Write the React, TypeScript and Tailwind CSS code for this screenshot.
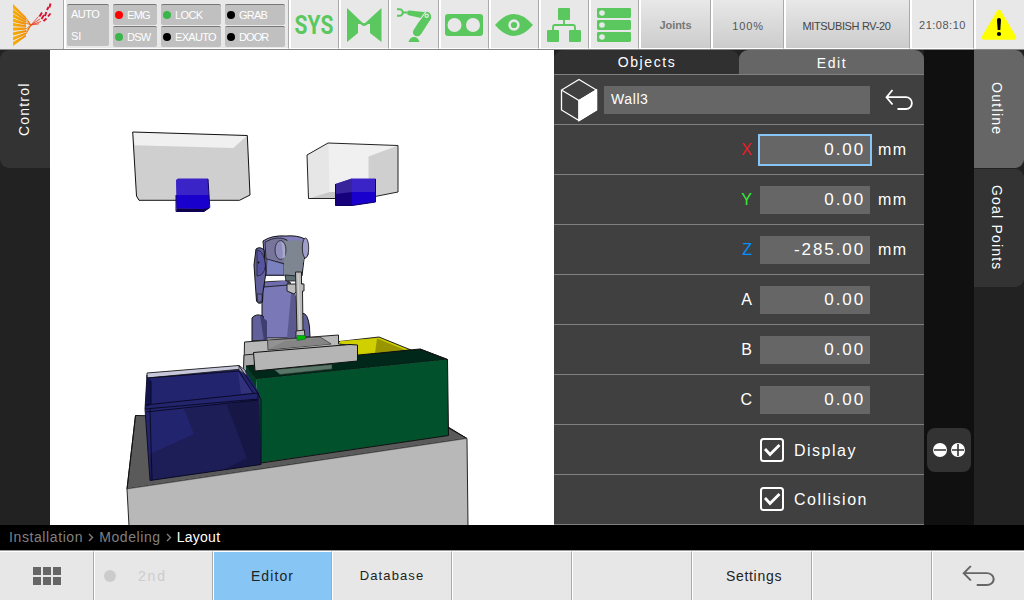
import React from "react";

const GREEN = "#5ac85e";

function TopCell({ width, gradient, children }: { width: string; gradient?: boolean; children?: React.ReactNode }) {
  return (
    <div
      className={`flex h-full shrink-0 items-center justify-center border-r border-l-2 border-b border-r-[#aaaaaa] border-l-white border-b-white ${width} ${
        gradient ? "bg-linear-to-b from-[#e8e8e8] to-[#cccccc]" : "bg-[#e8e8e8]"
      }`}
    >
      {children}
    </div>
  );
}

function Lamp({ color, label, tracking }: { color: string; label: string; tracking: string }) {
  return (
    <div className="flex h-[21px] items-center gap-[4px] rounded-[2px] border-t border-[#777777] bg-[#c0c0c0] pl-[2px] text-white">
      <span className={`size-[8px] shrink-0 rounded-full ${color}`} />
      <span className={`text-[11px] leading-none ${tracking}`}>{label}</span>
    </div>
  );
}

function Logo() {
  const rays = [
    [4, 9], [9.2, 13.6], [14, 18], [18.5, 22.3], [23, 26.6], [27.5, 31.2], [32.2, 36], [37, 41], [42, 46.5],
  ];
  const ends = [17, 19, 21, 23, 25.2, 27.6, 30, 32.4, 34.6];
  return (
    <svg width="63" height="49" viewBox="0 0 63 49">
      <defs>
        <linearGradient id="flame" gradientUnits="userSpaceOnUse" x1="13" y1="0" x2="38" y2="0">
          <stop offset="0" stopColor="#f8b000" />
          <stop offset="0.55" stopColor="#f08a10" />
          <stop offset="1" stopColor="#e02020" />
        </linearGradient>
      </defs>
      <g fill="url(#flame)">
        {rays.map((r, i) => (
          <path key={i} d={`M13 ${r[0]}L26 ${ends[i]}V${ends[i] + 1.9}L13 ${r[1] - 0.4}Z`} />
        ))}
      </g>
      <g stroke="url(#flame)" strokeWidth="1" fill="none">
        <path d="M26 18L31 25L26 34M26 20.5L31 25L26 32M26 23L31 25L26 29" />
      </g>
      <g stroke="#e8452a" strokeWidth="0.9">
        <path d="M31 25L38.5 16.5M31 25L40 19M31 25L41 21.5M31 25L39 23.8" />
      </g>
      <g stroke="#d8102c" strokeWidth="1.9">
        <path d="M39.5 16.5L42 12.5M41.5 19L44 15M45 16L46.3 12M43.5 21L46.5 18.5M47 10L48.5 7M49.5 7.5L50.5 3.5M48 16.5L50.5 13.5" />
      </g>
    </svg>
  );
}

function StatusIcons() {
  return (
    <>
      <TopCell width="w-[50px]">
        <span className="mt-[2px] mr-[1px] scale-x-[0.81] whitespace-nowrap font-[Roboto] text-[26px] leading-none font-bold text-[#5ac85e]">SYS</span>
      </TopCell>
      <TopCell width="w-[50px]">
        <svg className="shrink-0" width="47" height="48" viewBox="341 0 47 48">
          <path fill={GREEN} d="M347 8L362 22.3Q364 24.3 366 22.3L381.5 8V42L370 33V24H368Q366 26 364 26T360.5 24H358V33L347 42Z" />
        </svg>
      </TopCell>
      <TopCell width="w-[50px]">
        <svg className="shrink-0" width="47" height="48" viewBox="391 0 47 48">
          <path d="M397 9.2H399.5A3.3 3.3 0 0 1 399.5 15.8H397" fill="none" stroke={GREEN} strokeWidth="2" />
          <path d="M402 12.5H407" stroke={GREEN} strokeWidth="2" />
          <path fill={GREEN} d="M409.5 10.6Q407 10.4 407 13Q407 15.2 409.5 15.6L421 18L426 12.3Z" />
          <circle cx="426" cy="16.8" r="5.2" fill={GREEN} />
          <path fill={GREEN} d="M420 20L413.3 30.5Q412 34.5 415.5 36Q419.5 37 421.5 33.5L431 18.5L427 13Z" />
          <path d="M418.5 21.5L426.5 10.8" stroke="#e8e8e8" strokeWidth="1.1" />
          <circle cx="426.7" cy="15.8" r="1.6" fill="none" stroke="#e8e8e8" strokeWidth="1.3" />
          <path fill={GREEN} d="M408.5 42Q410 37 414 37T419.5 42Z" />
        </svg>
      </TopCell>
      <TopCell width="w-[50px]">
        <svg className="shrink-0" width="47" height="48" viewBox="441 0 47 48">
          <rect x="445" y="14" width="38" height="22" rx="3" fill={GREEN} />
          <circle cx="454.5" cy="25" r="7" fill="#e8e8e8" />
          <circle cx="473" cy="25" r="7" fill="#e8e8e8" />
        </svg>
      </TopCell>
      <TopCell width="w-[50px]">
        <svg className="shrink-0" width="47" height="48" viewBox="491 0 47 48">
          <path fill={GREEN} d="M495 25Q514 3 533 25Q514 47 495 25Z" />
          <circle cx="514" cy="25" r="4.4" fill={GREEN} stroke="#e8e8e8" strokeWidth="2.6" />
        </svg>
      </TopCell>
      <TopCell width="w-[50px]">
        <svg className="shrink-0" width="47" height="48" viewBox="541 0 47 48">
          <g fill={GREEN}>
            <rect x="558" y="8" width="12" height="12" rx="1" />
            <rect x="547" y="30" width="12" height="12" rx="1" />
            <rect x="569" y="30" width="12" height="12" rx="1" />
          </g>
          <path d="M564 20V25M553 30V27Q553 25 555 25H573Q575 25 575 27V30" fill="none" stroke={GREEN} strokeWidth="1.8" />
        </svg>
      </TopCell>
      <TopCell width="w-[50px]">
        <svg className="shrink-0" width="47" height="48" viewBox="591 0 47 48">
          {[8, 20, 32].map((y) => (
            <g key={y}>
              <rect x="597" y={y} width="34" height="10" rx="1.4" fill={GREEN} />
              <circle cx="602" cy={y + 5} r="2.8" fill="#e8e8e8" />
            </g>
          ))}
        </svg>
      </TopCell>
    </>
  );
}

function TopBar() {
  return (
    <header className="flex h-[50px] shrink-0 border-b border-[#858585] bg-[#e8e8e8]">
      <div className="w-[64px] shrink-0 border-r border-[#aaaaaa]">
        <Logo />
      </div>
      <div className="flex w-[225px] shrink-0 gap-[4px] border-r border-b border-l-2 border-r-[#aaaaaa] border-b-white border-l-white pt-[4px] pl-px">
        <div className="h-[42px] w-[42px] rounded-[2px] border-t border-[#777777] bg-[#c0c0c0] pl-[4px] text-[11px] text-white">
          <div className="h-[22px] pt-[4px] leading-none tracking-[-0.5px]">AUTO</div>
          <div className="pt-[4px] leading-none">SI</div>
        </div>
        <div className="flex w-[44px] flex-col gap-px">
          <Lamp color="bg-[#ff0000]" label="EMG" tracking="tracking-[-0.7px]" />
          <Lamp color="bg-[#39b54a]" label="DSW" tracking="tracking-[-0.8px]" />
        </div>
        <div className="flex w-[60px] flex-col gap-px">
          <Lamp color="bg-[#39b54a]" label="LOCK" tracking="tracking-[-0.6px]" />
          <Lamp color="bg-black" label="EXAUTO" tracking="tracking-[-0.7px]" />
        </div>
        <div className="flex w-[60px] flex-col gap-px">
          <Lamp color="bg-black" label="GRAB" tracking="tracking-[-0.8px]" />
          <Lamp color="bg-black" label="DOOR" tracking="tracking-[-0.9px]" />
        </div>
      </div>
      <StatusIcons />
      <TopCell width="w-[72px]" gradient>
        <span className="mt-[2px] text-[11px] font-bold tracking-[-0.05px] text-[#777777]">Joints</span>
      </TopCell>
      <TopCell width="w-[73px]" gradient>
        <span className="mt-[4px] text-[11px] tracking-[0.9px] text-[#555555]">100%</span>
      </TopCell>
      <TopCell width="w-[126px]" gradient>
        <span className="mt-[4px] mr-[2px] text-[11px] tracking-[-0.35px] whitespace-nowrap text-[#444444]">MITSUBISH RV-20</span>
      </TopCell>
      <TopCell width="w-[64px]">
        <span className="mt-[2px] text-[11px] tracking-[0.5px] text-[#555555]">21:08:10</span>
      </TopCell>
      <div className="w-[50px] shrink-0 border-l-2 border-white">
        <svg width="48" height="49" viewBox="976 0 48 49">
          <path d="M999 12L1014 37.5H984Z" fill="#ffff00" stroke="#ffff00" strokeWidth="4.5" strokeLinejoin="round" />
          <path d="M997 20Q997 18 999 18T1001 20L1000.3 30H997.7Z" />
          <circle cx="999" cy="34" r="2.1" />
        </svg>
      </div>
    </header>
  );
}

function Scene() {
  return (
    <svg className="w-[504px] shrink-0 bg-white" height="475" viewBox="50 50 504 475" strokeLinejoin="round">
      {/* table */}
      <path d="M135.5 415.5L440 422L467 438.5L127 489Z" fill="#5a5a5a" stroke="#111" />
      <path d="M127 489L467 438.5L468 526H129Z" fill="#b8b8b8" />
      <path d="M127 489L129 526M127 489L135.5 415.5M448.5 428L467 438.5L468 526" fill="none" stroke="#111" strokeWidth="0.9" />
      <path d="M127 489L467 438.5" stroke="#555" strokeWidth="0.6" />

      {/* upper left camera */}
      <path d="M132.7 132L247.3 135.5L250 195L239.5 200H139L136.5 196Z" fill="#cfcfcf" />
      <path d="M132.7 132L247.3 135.5L233.3 148L134.7 145.3Z" fill="#f0f0f0" />
      <path d="M132.7 132L247.3 135.5L250 195L239.5 200.3H139L136.5 196Z" fill="none" stroke="#111" />
      <path d="M176 180L178 178.5H208L209.5 208L204 211.5H176.5Z" fill="#3a24c8" />
      <path d="M176 195H209V208L204 209L176.5 208Z" fill="#1900cc" />
      <path d="M176.5 208.5L204 209L209.5 207.5L204 211.5H176.5Z" fill="#0d0045" />
      <path d="M176 195V211.5H204L209.8 207.5L208 179" fill="none" stroke="#100060" />

      {/* upper right camera */}
      <path d="M307 155L328 143L398 145.5V192L375 196L336 198.5H308.5Z" fill="#f0f0f0" />
      <path d="M307 155L328.5 143L329.5 192L308.5 198.5Z" fill="#e6e6e6" />
      <path d="M368.5 156.5L398 145.5V192L375 196L368.5 178Z" fill="#cfcfcf" />
      <path d="M308.5 198.5L329.5 192L336 192V198.5Z" fill="#c8c8c8" />
      <path d="M307 155L328 143L398 145.5V192L375 196.5L340 198.5H308.5Z" fill="none" stroke="#222" />
      <path d="M335.5 184L352 178.5H375.5V202L352 205.5H335.5Z" fill="#3a24c8" />
      <path d="M335.5 184L352 178.5V192L335.5 194Z" fill="#38259c" />
      <path d="M335.5 194L352 192V205.5H335.5Z" fill="#17007c" />
      <path d="M352 192H375.5V202L352 205.5Z" fill="#1900cc" />
      <path d="M335.5 184V205.5H352L375.5 202V179" fill="none" stroke="#100060" />

      {/* yellow bin */}
      <path d="M335 342L379 337L411 350L356 356Z" fill="#c9c900" stroke="#222" />
      <path d="M340 341L377 338.5V351L345 355Z" fill="#d0d000" />
      <path d="M377 338.5L405 350L375 353Z" fill="#989500" />

      {/* robot base and column */}
      <path d="M302 313Q308 313 309.5 327L310 337H300Z" fill="#62609b" stroke="#111" />
      <path d="M262 284Q276 280 290 282L300 338H262Z" fill="#7a78b6" stroke="#111" />
      <path d="M292 284L297 300V338H287Z" fill="#5b598e" />
      <path d="M264 282L288 280V285L264 287Z" fill="#6f6dae" stroke="#111" strokeWidth="0.8" />
      <path d="M252 318Q256 313 263 316L267 340L252 341Z" fill="#62609b" stroke="#111" />
      <path d="M260 315L267 321V340L264 341Z" fill="#3f3e70" />
      {/* forearm and wrist */}
      <path d="M263 241Q272 235 286 236Q297 235 305 239L307 243L308 255L304 259L302 276L288 278L284 276H264V253Z" fill="#8180bd" stroke="#111" />
      <path d="M265 242Q278 235 287 240L285 264L266 259Z" fill="#77759c" stroke="#111" strokeWidth="0.8" />
      <path d="M267 259L284 264V275H266Z" fill="#7b80bf" stroke="#111" strokeWidth="0.6" />
      <path d="M284 241L302 240L304 258L301 275L284 277Z" fill="#7e8791" />
      <ellipse cx="280.5" cy="250" rx="5.5" ry="9.5" fill="#8f8dbb" stroke="#222" strokeWidth="0.8" />
      <path d="M281 242Q286 242 285 257L282 259Q284 251 281 242Z" fill="#aaa9c9" />
      <ellipse cx="305.5" cy="248" rx="3.2" ry="10" fill="#a09eca" stroke="#111" strokeWidth="0.8" />
      <path d="M264 276H285V280.5H264Z" fill="#ffffff" />
      <path d="M285 275L297 276V281H286Z" fill="#5f7074" stroke="#111" strokeWidth="0.8" />
      <path d="M256 249Q260 246 264 250L266 272L263 292L262.5 302Q259 305 256.5 301L254 265Z" fill="#62609b" stroke="#111" />
      <path d="M257 250Q264 250 265.5 266Q264 276 257 276Z" fill="#5653a0" stroke="#111" strokeWidth="0.6" />
      <circle cx="258.5" cy="262.5" r="1" fill="#111" />
      <path d="M257 294H262V301L258 303Z" fill="#6866a8" stroke="#111" strokeWidth="0.6" />
      {/* tool */}
      <path d="M287 284H303V291H297L294 294L287 291Z" fill="#bcbcbc" stroke="#222" />
      <path d="M295.5 272H301.5V284H304V291H302.5L303 333H297Z" fill="#b9b9b9" stroke="#222" />
      <path d="M298 274L300 330" stroke="#d5d5d5" />
      <path d="M296 331L304.5 330L305 340L296 341Z" fill="#bdbdbd" stroke="#222" />

      {/* rear conveyor rails */}
      <path d="M244.5 342L338.5 335V344L357 346V361L244 367Z" fill="#b8b8b8" stroke="#222" />
      <path d="M244 355L255 354V374L243.5 370Z" fill="#aaaaaa" stroke="#222" />
      <path d="M267.5 340L320 337L331 344L268 350Z" fill="#929292" stroke="#333" strokeWidth="0.8" />
      <path d="M269 349L285 341L320 338L330 344Z" fill="#858585" />
      <path d="M297 335.5H305.5V339L297 340.5Z" fill="#00b900" stroke="#063" strokeWidth="0.6" />

      {/* green wall */}
      <path d="M246 366L420 349L447.5 359.5L256 379Z" fill="#00281a" stroke="#101010" />
      <path d="M246 366L256 379L262 462H246Z" fill="#003d23" />
      <path d="M256 379L447.5 359.5L448.5 435.5L261 462.5Z" fill="#00512c" />
      <path d="M420 349L447.5 359.5L448.5 435.5L261 463" fill="none" stroke="#111" />
      <path d="M274 369.5L332 364.5V369L280 374.5Z" fill="#597669" stroke="#27382f" strokeWidth="0.6" />
      {/* front rail */}
      <path d="M253.5 352.5L350 344.5L357.5 345V361L255 371Z" fill="#b5b5b5" stroke="#111" />

      {/* blue bin */}
      <path d="M147 373L239 365.5L246 371L259 393L261 464.5L150 480.5L145 408Z" fill="#23246e" />
      <path d="M147 373L239 365.5L242 369L147 378Z" fill="#c8c8db" stroke="#222" strokeWidth="0.9" />
      <path d="M239 365.5L245 370L247 376L239 370Z" fill="#b4b4cc" stroke="#222" strokeWidth="0.7" />
      <path d="M238 372L253 393L241 394Z" fill="#31317c" />
      <path d="M147 378L151 380V405L146 407Z" fill="#121450" />
      <path d="M184 409L259 400L261 464.5L150 480.5V454L194 434Z" fill="#1d1d57" />
      <path d="M227 405L259 399L261 464L225 469L247 458Z" fill="#161744" />
      <path d="M147 378L239 371M151 381V404M145 405L258 393V399L145 409M147 375L145 409L150 480.5L261 464.5V400L258 393L239 366M150 409L152 480M146 412L258 400M239 371L253 393" fill="none" stroke="#08081f" strokeWidth="0.9" />
    </svg>
  );
}

function BackArrow({ className }: { className: string }) {
  return (
    <svg className={className} viewBox="0 0 28 22" preserveAspectRatio="none" fill="none" stroke="currentColor">
      <path d="M7.5 1L1.5 8.2L7.5 15.5M1.5 8.2H21A5.8 5.8 0 0 1 21 20H12.5" />
    </svg>
  );
}

const fields = [
  { name: "X", color: "text-[#ed1c24]", value: "0.00", unit: "mm", focus: true },
  { name: "Y", color: "text-[#33ee33]", value: "0.00", unit: "mm" },
  { name: "Z", color: "text-[#0090ff]", value: "-285.00", unit: "mm" },
  { name: "A", color: "text-white", value: "0.00" },
  { name: "B", color: "text-white", value: "0.00" },
  { name: "C", color: "text-white", value: "0.00" },
];

function Check({ label, offset }: { label: string; offset: string }) {
  return (
    <div className={`flex h-[50px] shrink-0 items-center border-b border-[#808080] pl-[206px] ${offset}`}>
      <svg width="24" height="24" viewBox="0 0 24 24" fill="none" stroke="#ffffff">
        <rect x="1" y="1" width="22" height="22" rx="2.5" strokeWidth="2" />
        <path d="M5 11L10 16.5L19.5 7" strokeWidth="2.8" />
      </svg>
      <span className="mt-[2px] ml-[10px] text-[16px] tracking-[1.5px]">{label}</span>
    </div>
  );
}

function EditPanel() {
  return (
    <section className="flex w-[370px] shrink-0 flex-col bg-[#404040] text-white">
      <div className="flex h-[25px] shrink-0 border-b border-[#808080] bg-[#222222] text-[14px] tracking-[1.6px]">
        <div className="flex w-[185px] items-center justify-center rounded-t-[9px] bg-[#303030] pl-px">Objects</div>
        <div className="flex w-[185px] items-center justify-center rounded-t-[9px] bg-[#666666] pt-[2px] pl-px">Edit</div>
      </div>
      <div className="flex h-[50px] shrink-0 items-center border-b border-[#808080] pl-[6px]">
        <svg width="38" height="44" viewBox="0 0 38 44" fill="none" stroke="#ffffff" strokeWidth="1.3">
          <path d="M19 1.5L36.5 12V32L19 42.5L1.5 32V12ZM1.5 12L19 22.5L36.5 12M19 22.5V42.5" />
          <path d="M19 22.5L36.5 12V32L19 42.5Z" fill="#ffffff" />
        </svg>
        <div className="ml-[6px] flex h-[28px] w-[266px] items-center bg-[#666666] pl-[7px] text-[14px] tracking-[0.6px]">Wall3</div>
        <BackArrow className="ml-[15px] h-[22px] w-[28px] stroke-[1.8]" />
      </div>
      {fields.map((f) => (
        <div key={f.name} className="flex h-[50px] shrink-0 items-center border-b border-[#808080]">
          <span className={`w-[198px] pt-px text-right text-[16px] ${f.color}`}>{f.name}</span>
          <div
            className={`flex items-center justify-end bg-[#666666] pt-px text-[17px] tracking-[1.9px] ${
              f.focus ? "ml-[6px] h-[32px] w-[114px] border-2 border-[#87c5f5] pr-[5px]" : "ml-[8px] h-[28px] w-[110px] pr-[5px]"
            }`}
          >
            {f.value}
          </div>
          {f.unit && <span className={`pt-px text-[16px] tracking-[1.3px] ${f.focus ? "ml-[6px]" : "ml-[8px]"}`}>{f.unit}</span>}
        </div>
      ))}
      <Check label="Display" offset="pt-px" />
      <Check label="Collision" offset="pb-px" />
    </section>
  );
}

function RightRail() {
  return (
    <>
      <div className="flex w-[50px] shrink-0 justify-center bg-[#101010] pt-[378px]">
        <button className="flex size-[44px] items-center justify-center rounded-[8px] bg-[#333333]">
          <svg width="32" height="14" viewBox="0 0 32 14">
            <circle cx="7" cy="7" r="7" fill="#ffffff" />
            <circle cx="25" cy="7" r="7" fill="#ffffff" />
            <path d="M1 7H13M19 7H31M25 1V13" stroke="#333333" strokeWidth="1.6" />
          </svg>
        </button>
      </div>
      <aside className="flex w-[50px] shrink-0 flex-col gap-px bg-[#222222] text-[14px] text-white">
        <div className="flex h-[118px] w-[50px] items-center justify-center rounded-r-[9px] bg-[#666666] pr-[6px] tracking-[1.3px] [writing-mode:vertical-rl]">Outline</div>
        <div className="flex h-[118px] w-[50px] items-center justify-center rounded-r-[9px] bg-[#333333] pr-[6px] tracking-[1.2px] [writing-mode:vertical-rl]">Goal Points</div>
      </aside>
    </>
  );
}

function BottomButton({ width, active, children }: { width: string; active?: boolean; children?: React.ReactNode }) {
  return (
    <div
      className={`flex h-full shrink-0 items-center justify-center border-t border-r border-l border-t-white border-r-[#aaaaaa] border-l-white text-[13px] first:border-l-0 last:border-r-0 ${width} ${
        active ? "bg-[#87c5f5]" : "bg-[#e7e7e7]"
      }`}
    >
      {children}
    </div>
  );
}

function Chevron() {
  return (
    <svg className="mx-[5px]" width="6" height="9" viewBox="0 0 6 9" fill="none" stroke="currentColor" strokeWidth="1.4">
      <path d="M1 1L4.5 4.5L1 8" />
    </svg>
  );
}

export default function App() {
  return (
    <div className="flex h-[600px] w-[1024px] flex-col overflow-hidden bg-black font-['Liberation_Sans',Arial,sans-serif]">
      <TopBar />
      <main className="flex h-[475px] shrink-0">
        <aside className="w-[50px] shrink-0 bg-[#222222] text-[14px] text-white">
          <div className="flex h-[118px] w-[50px] rotate-180 items-center justify-center rounded-r-[9px] bg-[#333333] pl-[2px] tracking-[1.2px] [writing-mode:vertical-rl]">Control</div>
        </aside>
        <Scene />
        <EditPanel />
        <RightRail />
      </main>
      <nav className="flex h-[25px] shrink-0 items-center bg-black pl-[9px] text-[14px] tracking-[0.6px] text-[#808080]">
        <span>Installation</span>
        <Chevron />
        <span>Modeling</span>
        <Chevron />
        <span className="tracking-[0.25px] text-white">Layout</span>
      </nav>
      <footer className="flex h-[50px] shrink-0 border-t border-[#999999] text-[#222222]">
        <BottomButton width="w-[94px]">
          <svg width="28" height="18" viewBox="0 0 28 18" fill="#666666">
            <path d="M0 0h8v8H0zM10 0h8v8h-8zM20 0h8v8h-8zM0 10h8v8H0zM10 10h8v8h-8zM20 10h8v8h-8z" />
          </svg>
        </BottomButton>
        <BottomButton width="w-[119px]">
          <div className="flex w-full items-center pl-[9px] text-[#cccccc]">
            <span className="size-[12px] rounded-full bg-[#cccccc]" />
            <span className="ml-[22px] text-[14px] tracking-[1.8px]">2nd</span>
          </div>
        </BottomButton>
        <BottomButton width="w-[119px]" active><span className="text-[14px] tracking-[1.1px]">Editor</span></BottomButton>
        <BottomButton width="w-[120px]"><span className="tracking-[1.1px]">Database</span></BottomButton>
        <BottomButton width="w-[120px]" />
        <BottomButton width="w-[120px]" />
        <BottomButton width="w-[120px]"><span className="pl-[4px] text-[14px] tracking-[0.7px]">Settings</span></BottomButton>
        <BottomButton width="w-[120px]" />
        <BottomButton width="w-[92px]"><BackArrow className="h-[22px] w-[33px] stroke-[1.8] text-[#666666]" /></BottomButton>
      </footer>
    </div>
  );
}
